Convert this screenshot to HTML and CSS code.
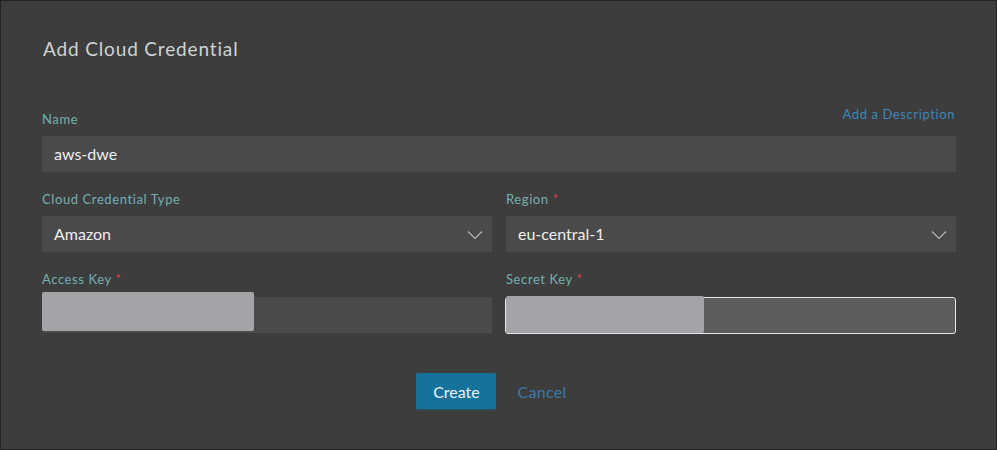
FILE: index.html
```html
<!DOCTYPE html>
<html lang="en">
<head>
  <meta charset="UTF-8">
  <title>Add Cloud Credential</title>
  <link rel="stylesheet" href="styles.css">
</head>
<body>
  <div class="modal">
    <h2 class="title">Add Cloud Credential</h2>

    <div class="field full">
      <div class="label-row">
        <label>Name</label>
        <a class="desc-link" href="#">Add a Description</a>
      </div>
      <div class="input">aws-dwe</div>
    </div>

    <div class="row">
      <div class="field">
        <label>Cloud Credential Type</label>
        <div class="input select">Amazon
          <svg class="chevron" viewBox="0 0 16 10" width="16" height="10"><path d="M1 1.5 L8 8.5 L15 1.5" fill="none" stroke="#b5b5b5" stroke-width="1.2"/></svg>
        </div>
      </div>
      <div class="field">
        <label>Region <span class="req">*</span></label>
        <div class="input select">eu-central-1
          <svg class="chevron" viewBox="0 0 16 10" width="16" height="10"><path d="M1 1.5 L8 8.5 L15 1.5" fill="none" stroke="#b5b5b5" stroke-width="1.2"/></svg>
        </div>
      </div>
    </div>

    <div class="row">
      <div class="field">
        <label>Access Key <span class="req">*</span></label>
        <div class="input secret">
          <div class="mask mask-access"></div>
        </div>
      </div>
      <div class="field">
        <label>Secret Key <span class="req">*</span></label>
        <div class="input secret focused">
          <div class="mask mask-secret"></div>
        </div>
      </div>
    </div>

    <div class="actions">
      <button class="btn-create">Create</button>
      <a class="btn-cancel" href="#">Cancel</a>
    </div>
  </div>
</body>
</html>
```

FILE: styles.css
```css
html, body {
  margin: 0;
  padding: 0;
  background-color: #3d3d3d;
}

body {
  font-family: Lato, "Open Sans", sans-serif;
}

.modal {
  box-sizing: border-box;
  width: 997px;
  height: 450px;
  border: 1px solid #232323;
  background-color: #3d3d3d;
  padding: 36px 40px 0 41px;
}

.title {
  margin: 0 0 0 1px;
  font-size: 19px;
  font-weight: normal;
  line-height: 24px;
  color: #cfd3d4;
  letter-spacing: 0.85px;
}

.field {
  display: flex;
  flex-direction: column;
}

.full {
  margin-top: 45px;
}

.label-row {
  display: flex;
  justify-content: space-between;
  align-items: flex-end;
}

label {
  font-size: 13px;
  line-height: 16px;
  color: #74b0b0;
  margin-bottom: 9px;
  letter-spacing: 0.6px;
}

.desc-link {
  font-size: 13px;
  line-height: 16px;
  color: #3f86b8;
  text-decoration: none;
  margin-bottom: 14px;
  margin-right: 1px;
  letter-spacing: 0.6px;
}

.req {
  color: #d9434e;
}

.input {
  position: relative;
  box-sizing: border-box;
  height: 36px;
  background-color: #4a4a4a;
  color: #eeeeee;
  font-size: 16px;
  line-height: 36px;
  padding: 0 12px;
}

.row {
  display: grid;
  grid-template-columns: 1fr 1fr;
  gap: 14px;
  margin-top: 19px;
}

.chevron {
  position: absolute;
  right: 9px;
  top: 14px;
}

.secret {
  margin-top: 1px;
  height: 36px;
}

.mask {
  position: absolute;
  left: 0;
  background-color: #a4a3a8;
  border-radius: 2px;
}

.mask-access {
  top: -5px;
  width: 212px;
  height: 39px;
}

.focused {
  background-color: #5b5d5c;
  border: 1px solid #e6e6e6;
  border-radius: 3px;
  height: 37px;
  margin-left: -1px;
}

.mask-secret {
  top: -2px;
  left: 0;
  width: 198px;
  height: 37px;
}

.actions {
  display: flex;
  justify-content: center;
  align-items: center;
  gap: 21px;
  margin-top: 39px;
  padding-right: 15px;
}

.btn-create {
  width: 80px;
  height: 36px;
  border: none;
  border-radius: 2px;
  background-color: #16729a;
  box-shadow: 0 2px 0 #2f4d59;
  color: #e8f3f7;
  font-family: Lato, "Open Sans", sans-serif;
  font-size: 16px;
  cursor: pointer;
}

.btn-cancel {
  color: #3c79aa;
  font-size: 16px;
  text-decoration: none;
  letter-spacing: 0.3px;
}
```
